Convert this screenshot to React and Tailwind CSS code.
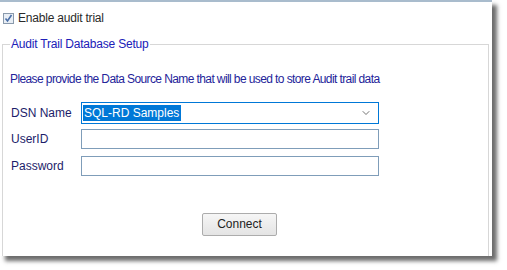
import { ChevronDown } from "lucide-react";

const font = { fontFamily: '"Liberation Sans", Arial, sans-serif' };

const Field = ({ label, className, children }) => (
  <div className={`flex items-center h-[20px] ${className}`}>
    <span className="w-[71px] text-[12px] text-[#1c1c6a] pl-[1px]">{label}</span>
    {children}
  </div>
);

const App = () => {
  return (
    <div className="w-[507px] h-[270px] bg-white" style={font}>
      <div className="w-[492px] h-[256px] bg-white border-t-2 border-[#a9bccd] shadow-[5px_5px_4px_rgba(60,60,60,0.75)] flex flex-col">
        <label className="flex items-center gap-[4px] pl-[3px] mt-[10px] h-[12px]">
          <span className="w-[11px] h-[11px] border border-[#8a9aac] bg-[#e8eef5] flex items-center justify-center">
            <svg width="9" height="9" viewBox="0 0 9 9">
              <path d="M1.5 4.5 L3.5 7 L7.5 1" stroke="#4a6fa8" strokeWidth="1.6" fill="none" />
            </svg>
          </span>
          <span className="text-[12px] text-[#2a2a2a] tracking-[-0.2px]">Enable audit trial</span>
        </label>

        <fieldset className="mt-[13px] ml-[2px] mr-[3px] flex-1 border-t border-l border-r border-[#d7d7d7] px-[7px] pb-0">
          <legend className="px-[1px] text-[12px] text-[#2020b8] tracking-[-0.2px] leading-[14px]">
            Audit Trail Database Setup
          </legend>

          <p className="mt-[21px] text-[12px] text-[#24249a] tracking-[-0.6px] leading-[14px]">
            Please provide the Data Source Name that will be used to store Audit trail data
          </p>

          <div className="mt-[16px] flex flex-col">
            <div className="flex items-center h-[22px]">
              <span className="w-[71px] text-[12px] text-[#1c1c6a] pl-[1px]">DSN Name</span>
              <div className="w-[298px] h-[22px] border border-[#0078d7] flex items-center justify-between pl-[1px] pr-[6px]">
                <span className="bg-[#0078d7] text-white text-[12px] leading-[16px] px-[1px] pr-[2px]">SQL-RD Samples</span>
                <ChevronDown size={12} strokeWidth={1.5} className="text-[#444]" />
              </div>
            </div>
            <Field label="UserID" className="mt-[5px]">
              <div className="w-[298px] h-[20px] border border-[#7f9db9] bg-white" />
            </Field>
            <Field label="Password" className="mt-[7px]">
              <div className="w-[298px] h-[20px] border border-[#7f9db9] bg-white" />
            </Field>
          </div>

          <div className="mt-[35px] pl-[192px]">
            <button className="w-[75px] h-[23px] rounded-[2px] border border-[#acacac] bg-gradient-to-b from-[#f6f6f6] to-[#e4e4e4] text-[12px] text-[#222]">
              Connect
            </button>
          </div>
        </fieldset>
      </div>
    </div>
  );
};

export default App;
